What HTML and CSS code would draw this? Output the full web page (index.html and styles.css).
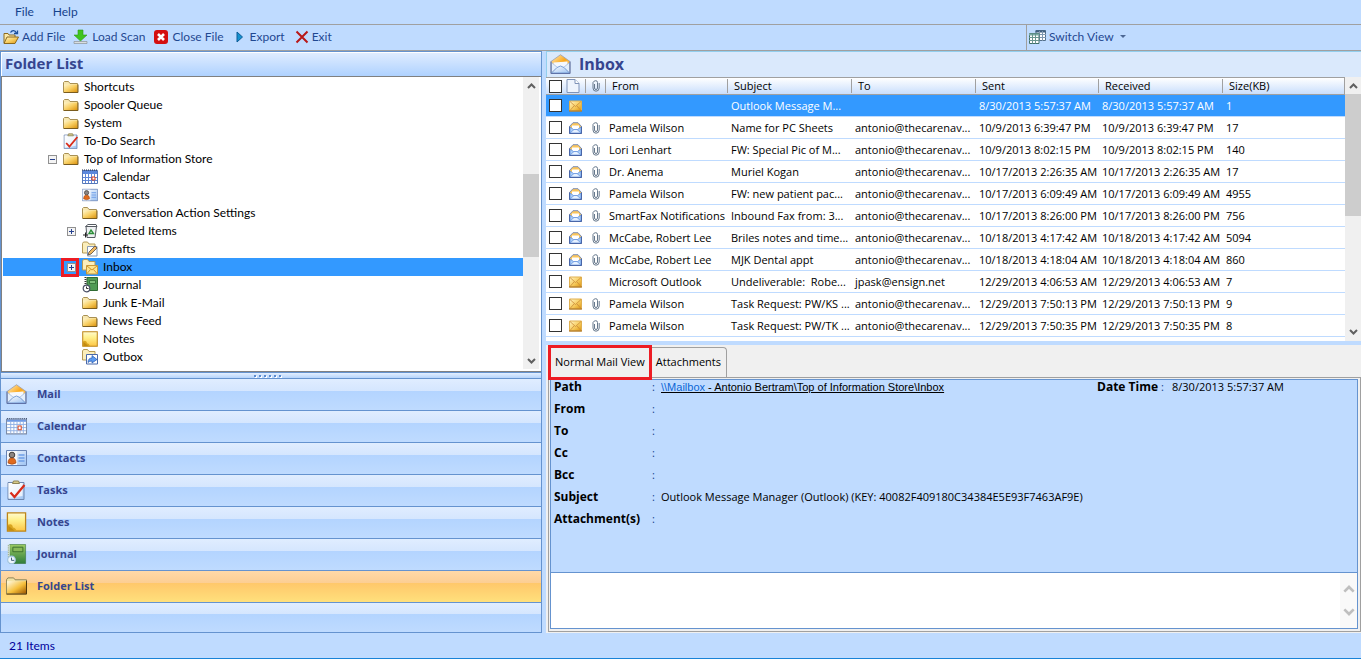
FILE: index.html
```
<!DOCTYPE html>
<html lang="en">
<head>
<meta charset="utf-8">
<title>Mail Viewer</title>
<link rel="stylesheet" href="styles.css">
</head>
<body>
<svg class="defs" width="0" height="0" aria-hidden="true">
  <defs>
    <linearGradient id="g-gold" x1="0" y1="0" x2="1" y2="1"><stop offset="0" stop-color="#fff6cc"/><stop offset=".5" stop-color="#f8cf63"/><stop offset="1" stop-color="#dc9410"/></linearGradient>
    <linearGradient id="g-deep" x1="0" y1="0" x2="1" y2="1"><stop offset="0" stop-color="#fffbe6"/><stop offset=".55" stop-color="#f5bf3a"/><stop offset="1" stop-color="#9c5600"/></linearGradient>
    <linearGradient id="g-note" x1="0" y1="0" x2="0" y2="1"><stop offset="0" stop-color="#fffbd0"/><stop offset=".4" stop-color="#fff08a"/><stop offset="1" stop-color="#fdc544"/></linearGradient>
    <linearGradient id="g-blue" x1="0" y1="0" x2="1" y2="1"><stop offset="0" stop-color="#ffffff"/><stop offset="1" stop-color="#9cc2f2"/></linearGradient>
    <linearGradient id="g-flap" x1="0" y1="0" x2="1" y2="1"><stop offset="0" stop-color="#fff0c4"/><stop offset=".5" stop-color="#fba81c"/><stop offset="1" stop-color="#fde3a8"/></linearGradient>
    <linearGradient id="g-green" x1="0" y1="0" x2="0" y2="1"><stop offset="0" stop-color="#9ccb62"/><stop offset="1" stop-color="#2f7d3c"/></linearGradient>
  </defs>
  <symbol id="folder" viewBox="0 0 16 16"><path d="M.5 13.500v-10l1-1h4l1.500 2h7.500v9z" fill="#f7e7b0" stroke="#a89054"/><path d="M1 5.500h13.500v7.500H1z" fill="url(#g-gold)"/><path d="M1 13.500h14v-8" fill="none" stroke="#7a5c1e"/></symbol>
  <symbol id="folder-lg" viewBox="0 0 22 18"><path d="M.5 17V2.500l1.500-2h6l1.500 2h12V17z" fill="#f3e3a4" stroke="#8b8154"/><path d="M1 4h20v13H1z" fill="url(#g-deep)"/><path d="M.5 17.500h21v-14" fill="none" stroke="#4a3208"/></symbol>
  <symbol id="open-folder" viewBox="0 0 16 16"><path d="M1 14V4.500h4l1 1.500h6V9" fill="#fbe9a8" stroke="#8c6a1e"/><path d="M1 14.500 4 8h11.500l-3.500 6.500z" fill="url(#g-gold)" stroke="#8c6a1e"/><path d="M7.500 3.500C9 1 12 1 13.500 4M11 4.500h3.500V1.500" fill="none" stroke="#1b4f9c" stroke-width="1.300"/></symbol>
  <symbol id="load" viewBox="0 0 16 16"><path d="M5 1h5v5h4L7.500 12 1 6h4z" fill="#3fc41f" stroke="#2b9a18" stroke-width=".6"/><path d="M1 12.500h13v2H1z" fill="#d9dde0" stroke="#8b9296" stroke-width=".7"/></symbol>
  <symbol id="close" viewBox="0 0 16 16"><rect x="1" y="1" width="14" height="14" rx="3" fill="#d40f10"/><path d="m5 5 6 6m0-6-6 6" stroke="#fff" stroke-width="2.600"/></symbol>
  <symbol id="play" viewBox="0 0 8 12"><path d="M1 1v10l5.500-5z" fill="#1492cf" stroke="#0c5b97"/></symbol>
  <symbol id="exit" viewBox="0 0 14 14"><path d="m1.500 1.500 11 11M12.500 1.500 1.500 12.500" stroke="#b81818" stroke-width="2"/></symbol>
  <symbol id="grids" viewBox="0 0 17 14"><path d="M7 .5h9.500v10H7z" fill="#fff" stroke="#53708c"/><path d="M6.500 1.500h10" stroke="#3f5f80" stroke-width="2"/><path d="M10.500 1v10M13.500 1v10M7 4.500h10M7 7.500h10" stroke="#7f98b0"/><path d="M.5 3.500H10v10H.5z" fill="#fff" stroke="#3f6f68"/><path d="M0 4.500h10" stroke="#79aaa4" stroke-width="2"/><path d="M3.500 4v9.500M6.500 4v9.500M0 7.500h10M0 10.500h10" stroke="#6a9690"/></symbol>
  <symbol id="mail-open" viewBox="0 0 20 20"><path d="M.5 7.500 10 .7l9.500 6.800V19.500H.5z" fill="url(#g-flap)" stroke="#9a9cab" stroke-width=".8"/><path d="M3 8.500 17 7.500V14H3z" fill="#f4f8ff"/><path d="M1 8.500 7 13.500 1 19zM19 8.500l-6 5 6 5.500z" fill="#e4effd" stroke="#8ba9d8" stroke-width=".6"/><path d="M1 19 6.500 13.500q3.500-3 7 0L19 19z" fill="url(#g-blue)" stroke="#6f97d2" stroke-width=".9"/><path d="M.5 7.500v12h19v-12" fill="none" stroke="#5f72a8"/></symbol>
  <symbol id="mail-read" viewBox="0 0 13 12"><path d="M.5 4.500 4 .7h5l3.500 3.800v7H.5z" fill="#fbc65c" stroke="#7f8fb5"/><path d="M3 3.500h7V8H3z" fill="#fff"/><path d="M1 5 4.500 7.500h4L12 5v6H1z" fill="#a9cdf9" stroke="#5f8fdc" stroke-width=".8"/><path d="m1 11 4-3.500h3l4 3.500z" fill="#e6f1ff" stroke="#5f8fdc" stroke-width=".7"/><path d="M.5 4.500v7h12v-7" fill="none" stroke="#4966a8"/></symbol>
  <symbol id="mail-closed" viewBox="0 0 13 11"><path d="M.5.500h12v10H.5z" fill="url(#g-gold)" stroke="#e0b050"/><path d="m1 1 5.500 5L12 1M1 10l4-4.500M12 10 8 5.500" fill="none" stroke="#c98a38" stroke-width=".8"/><path d="M0 10.500h13" fill="none" stroke="#a66f22"/></symbol>
  <symbol id="clip" viewBox="0 0 8 12"><path d="M2.500 4v4q0 1.500 1.500 1.500T5.500 8V2.500Q5.500.700 3.700.700T1 2.500V8q0 3.200 3 3.200T7.200 8V3" fill="none" stroke="#66788c"/></symbol>
  <symbol id="page" viewBox="0 0 14 14"><path d="M1 .5h8l4 4v9H1z" fill="#eef4fd" stroke="#7f93b8"/><path d="M9 .5v4h4" fill="#fff" stroke="#7f93b8"/></symbol>
  <symbol id="tasks" viewBox="0 0 20 20"><path d="M1.500 2.500h16v17h-16z" fill="url(#g-blue)" stroke="#6d87b0"/><path d="M2 3h14v13L2 18z" fill="#fff" opacity=".7"/><path d="M6 3.500 7 1h5l1 2.500z" fill="#d8cc8a" stroke="#8e8455"/><path d="M4 12.500 8 17 18 5" fill="none" stroke="#d92c1a" stroke-width="2.200"/></symbol>
  <symbol id="calendar" viewBox="0 0 20 16"><path d="M.5 1.500h19v14H.5z" fill="#fff" stroke="#7d8ca8"/><path d="M1 2h18v2H1z" fill="#6f9ae4"/><path d="M1 1h19" stroke="#4a5a78" stroke-width="1.200" stroke-dasharray="1 1"/><path d="M4.500 4v11M7.500 4v11M10.500 4v11M13.500 4v11M16.500 4v11M1 6.500h18M1 9.500h18M1 12.500h18" stroke="#8fb0e4" stroke-width=".9"/><path d="M11.500 8h3v3.500h-3z" fill="#fff" stroke="#dc4a25"/></symbol>
  <symbol id="calendar-sm" viewBox="0 0 16 16"><path d="M.5 1.500h15v13H.5z" fill="#fff" stroke="#5577b8"/><path d="M1 2h14v3H1z" fill="#5c88dc"/><path d="M0 1h16" stroke="#222f4a" stroke-dasharray="1 1"/><path d="M3.500 5v9M6.500 5v9M9.500 5v9M12.500 5v9M1 8.500h14M1 11.500h14" stroke="#5f86d6"/><path d="M10 8h3v3h-3z" fill="#fff" stroke="#dc3a15"/></symbol>
  <symbol id="contacts" viewBox="0 0 21 16"><path d="M.5.500h20v15H.5z" fill="url(#g-blue)" stroke="#6984b5"/><path d="M1 1h10v14H1z" fill="#f5f7fb"/><circle cx="6" cy="5" r="2.800" fill="#8b8583" stroke="#45403e"/><path d="M2 13q0-5 4-5t4 5q-4 2.500-8 0z" fill="#e06a1c" stroke="#934012" stroke-width=".6"/><path d="M12.500 5h6M12.500 8h6M12.500 11h6" stroke="#6e9ee8" stroke-width="1.300"/></symbol>
  <symbol id="notes" viewBox="0 0 22 22"><path d="M1 1h20v20H1z" fill="url(#g-note)" stroke="#bd8518" stroke-width="1.400"/><path d="M1.500 14q5-2 5.500 3 3 0 4 4H1.500z" fill="#d9a520"/><path d="m2 15 7 5.500H2z" fill="#c28a10"/></symbol>
  <symbol id="journal" viewBox="0 0 21 22"><path d="M3 .500h17.500v21H3z" fill="url(#g-green)" stroke="#2f6b33" stroke-width=".6"/><path d="M2 1v20" stroke="#dfe8d8" stroke-width="2"/><path d="M1.500 1v20" stroke="#7d957d" stroke-dasharray="1 1"/><path d="M6.500 3.500h11v5h-11z" fill="#89b95a" stroke="#386b2c"/><circle cx="5" cy="17.500" r="4.200" fill="#eef6fc" stroke="#9fc3e0" stroke-width="1.200"/><path d="M5 15v3h3" fill="none" stroke="#33506f"/></symbol>
  <symbol id="journal-sm" viewBox="0 0 16 16"><path d="M5 .500h10.500v13H5z" fill="#4f9a55" stroke="#2f6b33"/><path d="M3.500 0v10" stroke="#333" stroke-width="2" stroke-dasharray="1 1"/><path d="M7.500 3.500h6v3h-6z" fill="#7fc07c" stroke="#2f6b33" stroke-width=".8"/><circle cx="4.500" cy="11.500" r="3.300" fill="#fff" stroke="#4a4f66" stroke-width="1.200"/><path d="M4.500 9.500v2h2" fill="none" stroke="#333"/></symbol>
  <symbol id="trash" viewBox="0 0 16 16"><path d="M4 3.500h10.500L13 14.500H5z" fill="#eef0f2" stroke="#565b62"/><path d="M3.500 3.500 6 1.500h8l1 2z" fill="#fff" stroke="#565b62"/><path d="m7 10.500 2-3.500 2.500 3.500z" fill="none" stroke="#2c8f39" stroke-width="1.400"/><path d="M1 12h5M3.500 9.500v5" stroke="#222"/></symbol>
  <symbol id="drafts" viewBox="0 0 16 16"><path d="M.5 12V2.500l1-1.500h4L7 3h6v9z" fill="#fbeebb" stroke="#b59a56"/><path d="M5.500 5.500h9.500v9.500H5.500z" fill="#fff" stroke="#8698b5"/><path d="m6 14 1-3 6-6 2 2-6 6z" fill="#f0b860" stroke="#5a4a3a" stroke-width=".8"/></symbol>
  <symbol id="inbox" viewBox="0 0 16 16"><path d="M.5 11V2l1-1.500h4L7 2.500h6V11z" fill="#fbeebb" stroke="#b59a56"/><path d="M4.500 6.500h11v8.500h-11z" fill="#fce48e" stroke="#c9983a"/><path d="m5 7 5 4 5-4M5 14.500l3.500-4M15 14.500l-3.500-4" fill="none" stroke="#c98b23" stroke-width=".9"/></symbol>
  <symbol id="outbox" viewBox="0 0 16 16"><path d="M.5 11V2l1-1.500h4L7 2.500h6V11z" fill="#fbeebb" stroke="#b59a56"/><path d="M4.500 5.500h11v9.500h-11z" fill="#fff" stroke="#4a69a8"/><path d="M6 13.500q0-4.500 4-4.500V6.500l5 4-5 3.500v-2q-3 0-4 1.500z" fill="#5c9bf0" stroke="#2458b0" stroke-width=".7"/></symbol>
  <symbol id="up" viewBox="0 0 9 6"><path d="m1 5 3.500-3.500L8 5" fill="none" stroke="currentColor" stroke-width="2"/></symbol>
  <symbol id="down" viewBox="0 0 9 6"><path d="m1 1 3.500 3.500L8 1" fill="none" stroke="currentColor" stroke-width="2"/></symbol>
</svg>

<div class="app">
  <nav class="menubar"><button>File</button><button>Help</button></nav>

  <div class="toolbar">
    <div class="tools">
      <button><svg class="i16"><use href="#open-folder"/></svg>Add File</button>
      <button><svg class="i16"><use href="#load"/></svg>Load Scan</button>
      <button><svg class="i16"><use href="#close"/></svg>Close File</button>
      <button class="export"><svg class="i-play"><use href="#play"/></svg>Export</button>
      <button><svg class="i14"><use href="#exit"/></svg>Exit</button>
    </div>
    <div class="tools view"><button><svg class="i-grids"><use href="#grids"/></svg>Switch View<span class="caret"></span></button></div>
  </div>

  <main class="main">
    <section class="left">
      <h2 class="left-title">Folder List</h2>
      <div class="tree-box">
        <ul class="tree">
          <li><span class="exp-space"></span><svg class="i16"><use href="#folder"/></svg>Shortcuts</li>
          <li><span class="exp-space"></span><svg class="i16"><use href="#folder"/></svg>Spooler Queue</li>
          <li><span class="exp-space"></span><svg class="i16"><use href="#folder"/></svg>System</li>
          <li><span class="exp-space"></span><svg class="i16"><use href="#tasks"/></svg>To-Do Search</li>
          <li><button class="exp" aria-label="Collapse Top of Information Store"></button><svg class="i16"><use href="#folder"/></svg>Top of Information Store</li>
          <li class="sub"><span class="exp-space"></span><svg class="i16"><use href="#calendar-sm"/></svg>Calendar</li>
          <li class="sub"><span class="exp-space"></span><svg class="i16"><use href="#contacts"/></svg>Contacts</li>
          <li class="sub"><span class="exp-space"></span><svg class="i16"><use href="#folder"/></svg>Conversation Action Settings</li>
          <li class="sub"><button class="exp plus" aria-label="Expand Deleted Items"></button><svg class="i16"><use href="#trash"/></svg>Deleted Items</li>
          <li class="sub"><span class="exp-space"></span><svg class="i16"><use href="#drafts"/></svg>Drafts</li>
          <li class="sub selected"><button class="exp plus marked" aria-label="Expand Inbox"></button><svg class="i16"><use href="#inbox"/></svg>Inbox</li>
          <li class="sub"><span class="exp-space"></span><svg class="i16"><use href="#journal-sm"/></svg>Journal</li>
          <li class="sub"><span class="exp-space"></span><svg class="i16"><use href="#folder"/></svg>Junk E-Mail</li>
          <li class="sub"><span class="exp-space"></span><svg class="i16"><use href="#folder"/></svg>News Feed</li>
          <li class="sub"><span class="exp-space"></span><svg class="i16"><use href="#notes"/></svg>Notes</li>
          <li class="sub"><span class="exp-space"></span><svg class="i16"><use href="#outbox"/></svg>Outbox</li>
          <li class="sub"><span class="exp-space"></span><svg class="i16"><use href="#folder"/></svg></li>
        </ul>
        <div class="scrollbar"><button aria-label="Scroll up"><svg><use href="#up"/></svg></button><div class="track"><div class="thumb tree-thumb"></div></div><button aria-label="Scroll down"><svg><use href="#down"/></svg></button></div>
      </div>
      <div class="splitter"><i></i><i></i><i></i><i></i><i></i><i></i></div>
      <nav class="modules">
        <button><svg><use href="#mail-open"/></svg>Mail</button>
        <button><svg><use href="#calendar"/></svg>Calendar</button>
        <button><svg><use href="#contacts"/></svg>Contacts</button>
        <button><svg><use href="#tasks"/></svg>Tasks</button>
        <button><svg><use href="#notes"/></svg>Notes</button>
        <button><svg><use href="#journal"/></svg>Journal</button>
        <button class="active"><svg><use href="#folder-lg"/></svg>Folder List</button>
        <div class="overflow"></div>
      </nav>
    </section>

    <section class="right">
      <h2 class="right-title"><svg><use href="#mail-open"/></svg>Inbox</h2>
      <div class="list">
        <div class="list-body">
        <table>
          <colgroup><col class="c-check"><col class="c-icon"><col class="c-icon"><col class="c-from"><col class="c-wide"><col class="c-wide"><col class="c-date"><col class="c-wide"><col></colgroup>
          <thead><tr><th class="nosep"><input type="checkbox" aria-label="Select all"></th><th><svg class="i14" role="img" aria-label="Type"><use href="#page"/></svg></th><th><svg class="i-clip" role="img" aria-label="Attachment"><use href="#clip"/></svg></th><th>From</th><th>Subject</th><th>To</th><th>Sent</th><th>Received</th><th>Size(KB)</th></tr></thead>
          <tbody>
          <tr class="selected"><td><input type="checkbox" aria-label="Select message 1"></td><td><svg class="i-mail"><use href="#mail-closed"/></svg></td><td></td><td></td><td>Outlook Message M...</td><td></td><td>8/30/2013 5:57:37 AM</td><td>8/30/2013 5:57:37 AM</td><td>1</td></tr>
          <tr><td><input type="checkbox" aria-label="Select message 2"></td><td><svg class="i-mail"><use href="#mail-read"/></svg></td><td><svg class="i-clip"><use href="#clip"/></svg></td><td>Pamela Wilson</td><td>Name for PC Sheets</td><td>antonio@thecarenav...</td><td>10/9/2013 6:39:47 PM</td><td>10/9/2013 6:39:47 PM</td><td>17</td></tr>
          <tr><td><input type="checkbox" aria-label="Select message 3"></td><td><svg class="i-mail"><use href="#mail-read"/></svg></td><td><svg class="i-clip"><use href="#clip"/></svg></td><td>Lori Lenhart</td><td>FW: Special Pic of M...</td><td>antonio@thecarenav...</td><td>10/9/2013 8:02:15 PM</td><td>10/9/2013 8:02:15 PM</td><td>140</td></tr>
          <tr><td><input type="checkbox" aria-label="Select message 4"></td><td><svg class="i-mail"><use href="#mail-read"/></svg></td><td><svg class="i-clip"><use href="#clip"/></svg></td><td>Dr. Anema</td><td>Muriel Kogan</td><td>antonio@thecarenav...</td><td>10/17/2013 2:26:35 AM</td><td>10/17/2013 2:26:35 AM</td><td>17</td></tr>
          <tr><td><input type="checkbox" aria-label="Select message 5"></td><td><svg class="i-mail"><use href="#mail-read"/></svg></td><td><svg class="i-clip"><use href="#clip"/></svg></td><td>Pamela Wilson</td><td>FW: new patient pac...</td><td>antonio@thecarenav...</td><td>10/17/2013 6:09:49 AM</td><td>10/17/2013 6:09:49 AM</td><td>4955</td></tr>
          <tr><td><input type="checkbox" aria-label="Select message 6"></td><td><svg class="i-mail"><use href="#mail-read"/></svg></td><td><svg class="i-clip"><use href="#clip"/></svg></td><td>SmartFax Notifications</td><td>Inbound Fax from: 3...</td><td>antonio@thecarenav...</td><td>10/17/2013 8:26:00 PM</td><td>10/17/2013 8:26:00 PM</td><td>756</td></tr>
          <tr><td><input type="checkbox" aria-label="Select message 7"></td><td><svg class="i-mail"><use href="#mail-read"/></svg></td><td><svg class="i-clip"><use href="#clip"/></svg></td><td>McCabe, Robert Lee</td><td>Briles notes and time...</td><td>antonio@thecarenav...</td><td>10/18/2013 4:17:42 AM</td><td>10/18/2013 4:17:42 AM</td><td>5094</td></tr>
          <tr><td><input type="checkbox" aria-label="Select message 8"></td><td><svg class="i-mail"><use href="#mail-read"/></svg></td><td><svg class="i-clip"><use href="#clip"/></svg></td><td>McCabe, Robert Lee</td><td>MJK Dental appt</td><td>antonio@thecarenav...</td><td>10/18/2013 4:18:04 AM</td><td>10/18/2013 4:18:04 AM</td><td>860</td></tr>
          <tr><td><input type="checkbox" aria-label="Select message 9"></td><td><svg class="i-mail"><use href="#mail-closed"/></svg></td><td></td><td>Microsoft Outlook</td><td>Undeliverable:&nbsp; Robe...</td><td>jpask@ensign.net</td><td>12/29/2013 4:06:53 AM</td><td>12/29/2013 4:06:53 AM</td><td>7</td></tr>
          <tr><td><input type="checkbox" aria-label="Select message 10"></td><td><svg class="i-mail"><use href="#mail-closed"/></svg></td><td><svg class="i-clip"><use href="#clip"/></svg></td><td>Pamela Wilson</td><td>Task Request: PW/KS ...</td><td>antonio@thecarenav...</td><td>12/29/2013 7:50:13 PM</td><td>12/29/2013 7:50:13 PM</td><td>9</td></tr>
          <tr><td><input type="checkbox" aria-label="Select message 11"></td><td><svg class="i-mail"><use href="#mail-closed"/></svg></td><td><svg class="i-clip"><use href="#clip"/></svg></td><td>Pamela Wilson</td><td>Task Request: PW/TK ...</td><td>antonio@thecarenav...</td><td>12/29/2013 7:50:35 PM</td><td>12/29/2013 7:50:35 PM</td><td>8</td></tr>
          </tbody>
        </table>
        </div>
        <div class="scrollbar"><button aria-label="Scroll up"><svg><use href="#up"/></svg></button><div class="track"><div class="thumb list-thumb"></div></div><button aria-label="Scroll down"><svg><use href="#down"/></svg></button></div>
      </div>

      <div class="preview">
        <div class="tabs"><button class="tab current">Normal Mail View</button><button class="tab">Attachments</button></div>
        <div class="tab-page">
          <div class="message">
            <div class="details">
              <div class="fields">
                <b>Path</b><span class="colon">:</span><a class="path" href="#path"><span>\\Mailbox</span> - Antonio Bertram\Top of Information Store\Inbox</a>
                <b>From</b><span class="colon">:</span><span></span>
                <b>To</b><span class="colon">:</span><span></span>
                <b>Cc</b><span class="colon">:</span><span></span>
                <b>Bcc</b><span class="colon">:</span><span></span>
                <b>Subject</b><span class="colon">:</span><span>Outlook Message Manager (Outlook) (KEY: 40082F409180C34384E5E93F7463AF9E)</span>
                <b>Attachment(s)</b><span class="colon">:</span><span></span>
              </div>
              <div class="date"><b>Date Time</b><span class="colon">:</span><span>8/30/2013 5:57:37 AM</span></div>
            </div>
            <div class="body"><div class="body-scroll"><svg><use href="#up"/></svg><svg><use href="#down"/></svg></div></div>
          </div>
        </div>
      </div>
    </section>
  </main>

  <footer class="status">21 Items</footer>
</div>
</body>
</html>
```
FILE: styles.css
```
* { box-sizing: border-box; }

body {
  margin: 0;
  background: #bfdbff;
  color: #000;
  font: 12px/18px Lato, "Open Sans", sans-serif;
}

button {
  margin: 0;
  padding: 0;
  border: 0;
  background: none;
  color: inherit;
  font: inherit;
}

svg { display: block; flex: none; }
.defs { position: absolute; }
.i14 { width: 14px; height: 14px; }
.i16 { width: 16px; height: 16px; }
.i-play { width: 8px; height: 12px; }
.i-grids { width: 17px; height: 14px; }
.i-mail { width: 13px; height: 12px; }
.i-clip { width: 8px; height: 12px; }

.app {
  display: grid;
  grid-template-rows: 24px 27px minmax(0, 1fr) 26px;
  height: 100vh;
}

/* Menu and toolbar */
.menubar { display: flex; align-items: center; gap: 19px; padding-left: 15px; color: #15428b; }

.toolbar {
  display: grid;
  grid-template-columns: minmax(0, 1fr) 335px;
  border: solid #a0a0a0;
  border-width: 1px 0;
  color: #1f4891;
}
.tools { display: flex; align-items: center; gap: 8px; padding: 0 0 2px 3px; }
.tools button { display: flex; align-items: center; gap: 3px; }
.tools .export { gap: 6px; padding: 0 2px 0 4px; }
.tools.view { padding-left: 2px; border-left: 1px solid #a0a0a0; }
.caret { margin-left: 3px; border: 3px solid transparent; border-top-color: #4c6793; border-bottom-width: 0; }

.main {
  display: grid;
  grid-template-columns: minmax(0, 542fr) minmax(0, 815fr);
  gap: 4px;
}

/* Folder panel */
.left {
  display: flex;
  flex-direction: column;
  min-height: 0;
  border: solid #6593cf;
  border-width: 1px 1px 0;
}
.left-title, .right-title {
  margin: 0;
  color: #36458f;
  font: bold 15px/20px "Open Sans", sans-serif;
}
.left-title {
  height: 24px;
  padding-left: 3px;
  border: solid #fff;
  border-width: 1px 0 0 1px;
  background: linear-gradient(#dfecff, #afd2ff);
}
.tree-box {
  display: flex;
  flex: 1;
  min-height: 0;
  padding: 0 2px 2px 1px;
  overflow: hidden;
  border: solid #808080;
  border-width: 1px 0 1px 1px;
  background: #fff;
}
.tree { flex: 1; margin: 0; padding: 1px 0 0; overflow: hidden; list-style: none; }
.tree li { display: flex; align-items: center; height: 18px; padding-left: 45px; }
.tree li.sub { padding-left: 64px; }
.tree li svg { margin-right: 5px; }
.tree .selected { background: #3399ff; }
.exp, .exp-space { flex: none; width: 9px; height: 9px; margin-right: 6px; }
.exp {
  position: relative;
  border: 1px solid #919191;
  background:
    linear-gradient(#26418f, #26418f) center / 5px 1px no-repeat,
    #f4f4f4;
}
.exp.plus {
  background:
    linear-gradient(#26418f, #26418f) center / 5px 1px no-repeat,
    linear-gradient(#26418f, #26418f) center / 1px 5px no-repeat,
    #f4f4f4;
}
.marked::after { content: ""; position: absolute; inset: -6px -4px -6px -7px; border: 3px solid #ed1c24; }

.scrollbar { display: flex; flex: none; flex-direction: column; width: 16px; background: #f0f0f0; color: #606060; }
.scrollbar button { display: grid; place-items: center; height: 17px; }
.scrollbar svg { width: 9px; height: 6px; }
.track { position: relative; flex: 1; }
.thumb { position: absolute; right: 0; left: 0; background: #cdcdcd; }
.tree-thumb { top: 31%; height: 32%; }
.list-thumb { top: 0; height: 53%; }

.splitter {
  display: flex;
  align-items: center;
  justify-content: center;
  gap: 3px;
  height: 6px;
  padding-right: 8px;
  border-top: 1px solid #6593cf;
  background: linear-gradient(#e3efff, #b6d4fb);
}
.splitter i { width: 2px; height: 2px; background: #5b8bd0; box-shadow: 1px 1px #fff; }

.modules button, .overflow {
  display: grid;
  grid-template-columns: 22px 1fr;
  align-items: center;
  gap: 10px;
  width: 100%;
  height: 32px;
  padding: 0 0 2px 4px;
  border-top: 1px solid #6593cf;
  background: linear-gradient(#e0edff, #d5e6fe 38%, #b3d4ff 38%, #bfdbff);
  color: #36458f;
  font: bold 11px/16px "Open Sans", sans-serif;
  text-align: left;
}
.modules svg { width: 21px; height: 20px; justify-self: end; }
.modules .active { background: linear-gradient(#ffd9a8, #fcce93 38%, #ffc76a 38%, #ffe07c); }
.modules .overflow { height: 31px; border-bottom: 1px solid #6593cf; }

/* Message list */
.right { display: flex; flex-direction: column; min-width: 0; min-height: 0; }
.right-title {
  display: flex;
  align-items: center;
  gap: 8px;
  height: 26px;
  padding: 0 0 2px 3px;
  border: solid #93cfee;
  border-width: 1px 0 0 1px;
  background: #dae9fc;
  font-size: 16px;
}
.right-title svg { width: 21px; height: 20px; }

.list { display: flex; flex: 264 1 0; min-height: 0; background: #fff; font: 11px/16px "Open Sans", sans-serif; }
.list-body { flex: 1; min-width: 0; overflow: hidden; }
table { width: 100%; table-layout: fixed; border-spacing: 0; }
.c-check, .c-icon { width: 20px; }
.c-from { width: 122px; }
.c-wide { width: 124px; }
.c-date { width: 123px; }
th, td { padding: 0 0 0 3px; text-align: left; white-space: nowrap; overflow: hidden; }
th {
  height: 18px;
  padding-left: 6px;
  border: solid #a0a0a0;
  border-width: 1px 0;
  background:
    linear-gradient(#a0a0a0, #a0a0a0) right center / 1px 14px no-repeat,
    linear-gradient(#fff, #c9defc);
  font-weight: normal;
}
th.nosep { background: linear-gradient(#fff, #c9defc); }
th:nth-child(-n+3) { padding-left: 0; }
th:last-child { border-right: 1px solid #a0a0a0; background: linear-gradient(#fff, #c9defc); }
td { height: 22px; border-bottom: 1px solid #bfdbff; }
th:first-child, td:first-child { padding-left: 3px; }
td:nth-child(3), th:nth-child(3) { padding-left: 6px; }
.list .selected td { background: #3399ff; color: #fff; }
input[type="checkbox"] {
  display: block;
  appearance: none;
  width: 13px;
  height: 13px;
  margin: 0;
  border: 1px solid #333;
  background: #fff;
}

/* Preview */
.preview {
  display: flex;
  flex: 288 1 0;
  flex-direction: column;
  min-height: 0;
  margin-top: 4px;
  padding: 0 0 1px 2px;
  background: #f0f0f0;
  font: 11px/14px "Open Sans", sans-serif;
}
.tabs { display: flex; align-items: flex-end; height: 32px; }
.tab { height: 30px; padding: 0 5px 0 4px; border: solid #a0a0a0; border-width: 1px 1px 0 0; border-radius: 0 4px 0 0; }
.tab.current {
  position: relative;
  align-self: flex-start;
  height: 35px;
  padding: 0 4px;
  border: 3px solid #ed1c24;
  border-radius: 0;
}
.tab-page { display: flex; flex: 1; min-height: 0; padding: 1px 2px 2px 1px; border: 1px solid #a0a0a0; }
.message { display: flex; flex: 1; flex-direction: column; min-width: 0; border: 1px solid #6593cf; background: #bfdbff; }
.details { display: flex; flex: 1; justify-content: space-between; padding-left: 3px; white-space: nowrap; }
.details b { font-size: 12px; }
.fields { display: grid; grid-template-columns: 98px 9px 1fr; grid-auto-rows: 14px; gap: 8px 0; align-content: start; }
.date { display: grid; grid-template-columns: 64px 11px 185px; align-content: start; }
.colon { color: #15428b; }
.path { color: #000; font-family: "Liberation Sans", sans-serif; }
.path span { color: #0b66d6; }
.body { display: flex; justify-content: flex-end; height: 56px; border-top: 1px solid #6593cf; background: #fff; }
.body-scroll {
  display: flex;
  flex-direction: column;
  align-items: center;
  justify-content: center;
  gap: 15px;
  width: 17px;
  background: #f9f9f9;
  color: #bfbfbf;
}
.body-scroll svg { width: 12px; height: 8px; }

.status { padding: 4px 9px; border-bottom: 1px solid #1883d7; color: #00009c; }
```
